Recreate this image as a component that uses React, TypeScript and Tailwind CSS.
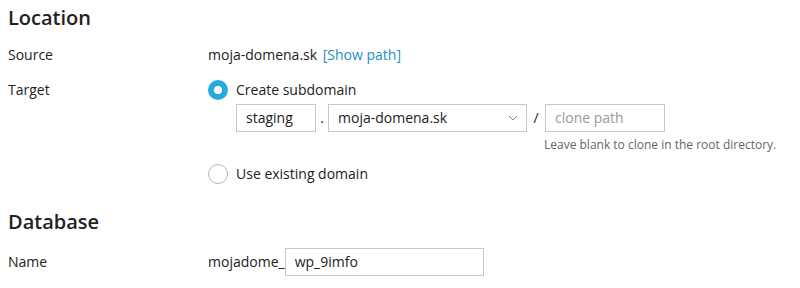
import React from "react";

function Radio({ checked }: { checked: boolean }) {
  return checked ? (
    <span className="box-border inline-block w-[20px] h-[20px] rounded-full border-[6px] border-[#28aadc] bg-white shrink-0" />
  ) : (
    <span className="box-border inline-block w-[20px] h-[20px] rounded-full border border-[#b5b5b5] bg-white shrink-0" />
  );
}

export default function App() {
  return (
    <div className="w-[800px] h-[288px] bg-white text-[#222222] text-[14px] leading-[20px] px-[8px] pt-[5px]" style={{ fontFamily: '"Open Sans", sans-serif' }}>
      <h2 className="text-[20px] leading-[26px] font-semibold">Location</h2>
      <div className="flex mt-[14px]">
        <div className="w-[200px]">Source</div>
        <div>
          moja-domena.sk <a className="text-[#288dc4] ml-[2px]">[Show path]</a>
        </div>
      </div>
      <div className="flex mt-[15px]">
        <div className="w-[200px]">Target</div>
        <div>
          <label className="flex items-center gap-[8px]">
            <Radio checked />
            <span>Create subdomain</span>
          </label>
          <div className="ml-[28px] mt-[4px] flex items-center">
            <div className="box-border w-[80px] h-[28px] border border-[#c8c8c8] px-[9px] flex items-center">staging</div>
            <span className="w-[12px] text-center">.</span>
            <div className="box-border w-[199px] h-[28px] border border-[#c8c8c8] pl-[9px] pr-[8px] flex items-center justify-between">
              <span>moja-domena.sk</span>
              <svg width="10" height="6" viewBox="0 0 10 6" fill="none" stroke="#888" strokeWidth="1">
                <path d="M1 1l4 4 4-4" />
              </svg>
            </div>
            <span className="w-[18px] text-center">/</span>
            <div className="box-border w-[120px] h-[28px] border border-[#c8c8c8] px-[9px] flex items-center text-[#9a9a9a]">clone path</div>
          </div>
          <div className="ml-[336px] mt-[5px] text-[12px] leading-[16px] text-[#666]">Leave blank to clone in the root directory.</div>
          <label className="flex items-center gap-[8px] mt-[11px]">
            <Radio checked={false} />
            <span>Use existing domain</span>
          </label>
        </div>
      </div>
      <h2 className="text-[20px] leading-[26px] font-semibold mt-[25px]">Database</h2>
      <div className="flex items-center mt-[13px]">
        <div className="w-[200px]">Name</div>
        <div className="flex items-center">
          <span>mojadome_</span>
          <div className="box-border w-[199px] h-[28px] border border-[#c8c8c8] px-[9px] flex items-center">wp_9imfo</div>
        </div>
      </div>
    </div>
  );
}
